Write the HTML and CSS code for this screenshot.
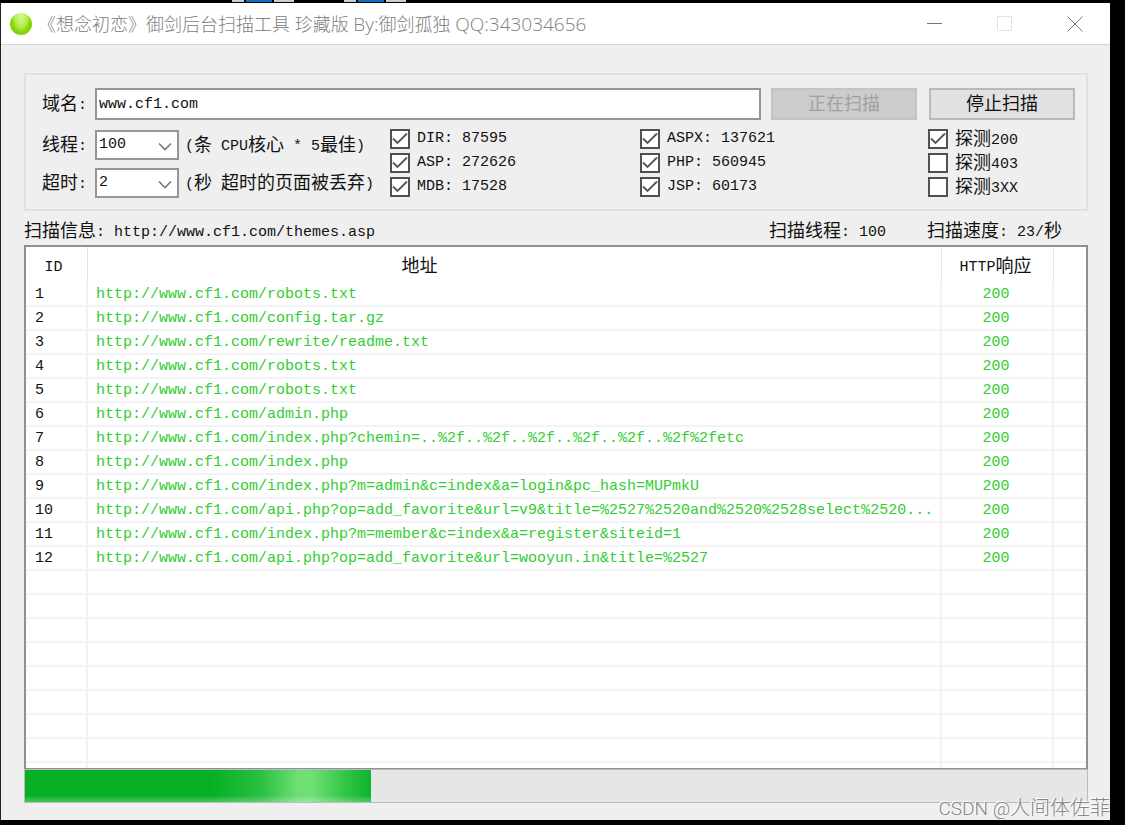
FILE: index.html
```html
<!DOCTYPE html>
<html lang="zh-CN">
<head>
<meta charset="utf-8">
<title>御剑后台扫描工具</title>
<link rel="stylesheet" href="styles.css">
</head>
<body>
<div class="desktop-strip"><i class="thumb"></i><i class="thumb"></i></div>
<main class="window">
  <header class="titlebar">
    <span class="orb"></span>
    <h1 class="title">《想念初恋》御剑后台扫描工具 珍藏版 <span class="title-en">By:</span>御剑孤独 <span class="title-en">QQ:343034656</span></h1>
    <div class="window-buttons">
      <button type="button" aria-label="最小化"><svg width="16" height="16" viewBox="0 0 16 16"><path d="M0 7.5H15" stroke="#777"/></svg></button>
      <button type="button" aria-label="最大化" disabled><svg width="16" height="16" viewBox="0 0 16 16"><path d="M.5 .5H14.5V14.5H.5Z" stroke="#e2e2e2"/></svg></button>
      <button type="button" aria-label="关闭"><svg width="16" height="16" viewBox="0 0 16 16"><path d="M.5 .5L15.5 15.5M15.5 .5L.5 15.5" stroke="#777"/></svg></button>
    </div>
  </header>

  <div class="content">
    <section class="settings">
      <div class="domain-row">
        <label class="field-label" for="domain">域名<span class="en">:</span></label>
        <input class="domain en" id="domain" type="text" value="www.cf1.com">
        <button class="push" type="button" disabled>正在扫描</button>
        <button class="push" type="button">停止扫描</button>
      </div>
      <div class="options">
        <div class="limits">
          <div class="limit">
            <label class="field-label" for="threads">线程<span class="en">:</span></label>
            <span class="combo"><select class="en" id="threads"><option>100</option></select><svg width="14" height="9" viewBox="0 0 14 9"><path d="M1 1.5L7 7.5L13 1.5" stroke="#777" stroke-width="1.6"/></svg></span>
            <span class="hint"><span class="en">(</span>条<span class="en"> CPU</span>核心<span class="en"> * 5</span>最佳<span class="en">)</span></span>
          </div>
          <div class="limit">
            <label class="field-label" for="timeout">超时<span class="en">:</span></label>
            <span class="combo"><select class="en" id="timeout"><option>2</option></select><svg width="14" height="9" viewBox="0 0 14 9"><path d="M1 1.5L7 7.5L13 1.5" stroke="#777" stroke-width="1.6"/></svg></span>
            <span class="hint"><span class="en">(</span>秒<span class="en"> </span>超时的页面被丢弃<span class="en">)</span></span>
          </div>
        </div>
        <div class="checks">
          <label><input type="checkbox" checked><span class="en">DIR: 87595</span></label>
          <label><input type="checkbox" checked><span class="en">ASP: 272626</span></label>
          <label><input type="checkbox" checked><span class="en">MDB: 17528</span></label>
        </div>
        <div class="checks checks-wide">
          <label><input type="checkbox" checked><span class="en">ASPX: 137621</span></label>
          <label><input type="checkbox" checked><span class="en">PHP: 560945</span></label>
          <label><input type="checkbox" checked><span class="en">JSP: 60173</span></label>
        </div>
        <div class="checks">
          <label><input type="checkbox" checked><span class="hint">探测<span class="en">200</span></span></label>
          <label><input type="checkbox"><span class="hint">探测<span class="en">403</span></span></label>
          <label><input type="checkbox"><span class="hint">探测<span class="en">3XX</span></span></label>
        </div>
      </div>
    </section>

    <div class="status">
      <span class="status-url">扫描信息<span class="en">: http://www.cf1.com/themes.asp</span></span>
      <span class="status-item">扫描线程<span class="en">: 100</span></span>
      <span class="status-item">扫描速度<span class="en">: 23/</span>秒</span>
    </div>

    <table class="results">
      <colgroup><col class="col-id"><col><col class="col-code"><col class="col-rest"></colgroup>
      <thead><tr><th><span class="en">ID</span></th><th class="address">地址</th><th><span class="en">HTTP</span>响应</th><th></th></tr></thead>
      <tbody>
        <tr><td>1</td><td>http://www.cf1.com/robots.txt</td><td>200</td><td></td></tr>
        <tr><td>2</td><td>http://www.cf1.com/config.tar.gz</td><td>200</td><td></td></tr>
        <tr><td>3</td><td>http://www.cf1.com/rewrite/readme.txt</td><td>200</td><td></td></tr>
        <tr><td>4</td><td>http://www.cf1.com/robots.txt</td><td>200</td><td></td></tr>
        <tr><td>5</td><td>http://www.cf1.com/robots.txt</td><td>200</td><td></td></tr>
        <tr><td>6</td><td>http://www.cf1.com/admin.php</td><td>200</td><td></td></tr>
        <tr><td>7</td><td>http://www.cf1.com/index.php?chemin=..%2f..%2f..%2f..%2f..%2f..%2f%2fetc</td><td>200</td><td></td></tr>
        <tr><td>8</td><td>http://www.cf1.com/index.php</td><td>200</td><td></td></tr>
        <tr><td>9</td><td>http://www.cf1.com/index.php?m=admin&amp;c=index&amp;a=login&amp;pc_hash=MUPmkU</td><td>200</td><td></td></tr>
        <tr><td>10</td><td>http://www.cf1.com/api.php?op=add_favorite&amp;url=v9&amp;title=%2527%2520and%2520%2528select%2520...</td><td>200</td><td></td></tr>
        <tr><td>11</td><td>http://www.cf1.com/index.php?m=member&amp;c=index&amp;a=register&amp;siteid=1</td><td>200</td><td></td></tr>
        <tr><td>12</td><td>http://www.cf1.com/api.php?op=add_favorite&amp;url=wooyun.in&amp;title=%2527</td><td>200</td><td></td></tr>
        <tr><td></td><td></td><td></td><td></td></tr>
        <tr><td></td><td></td><td></td><td></td></tr>
        <tr><td></td><td></td><td></td><td></td></tr>
        <tr><td></td><td></td><td></td><td></td></tr>
        <tr><td></td><td></td><td></td><td></td></tr>
        <tr><td></td><td></td><td></td><td></td></tr>
        <tr><td></td><td></td><td></td><td></td></tr>
        <tr><td></td><td></td><td></td><td></td></tr>
        <tr class="tail"><td></td><td></td><td></td><td></td></tr>
      </tbody>
    </table>
    <progress class="scan-progress" value="326" max="1000" aria-label="扫描进度"></progress>
  </div>
</main>
<div class="watermark"><span class="watermark-en">CSDN @</span>人间体佐菲</div>
</body>
</html>
```
FILE: styles.css
```css
* { box-sizing: border-box; }

body {
  position: relative;
  margin: 0;
  padding: 0 15px 5px 0;
  background: #000;
  color: #111;
  font: 18px/24px "Noto Sans CJK SC", sans-serif;
}

button, input, select {
  margin: 0;
  font: inherit;
  color: inherit;
}

svg { fill: none; }

.en {
  font-family: "Liberation Mono", monospace;
  font-size: 15px;
  line-height: 18px;
  vertical-align: 1px;
  white-space: pre;
}

/* taskbar thumbnails peeking out above the window */
.desktop-strip {
  display: flex;
  gap: 50px;
  height: 3px;
  padding-left: 232px;
}

.thumb {
  width: 62px;
  height: 2px;
  background: linear-gradient(90deg, #ccc 12px, #000 12px 14px, #0f6fc0 14px 40px, #000 40px 42px, #ccc 42px);
}

.window {
  background: #efefef;
  border-left: 1px solid #222;
}

.titlebar {
  display: flex;
  align-items: center;
  height: 42px;
  padding-left: 9px;
  background: #fff;
  border-bottom: 1px solid #d6d6d6;
}

.orb {
  width: 22px;
  height: 22px;
  border-radius: 50%;
  background: radial-gradient(ellipse at 50% 15%, #d9f89a 0, #b4ec4c 40%, #83d60a 62%, #76c900 100%);
}

.title {
  flex: 1;
  margin: 0 0 0 6px;
  color: #808080;
  font: 300 18px/24px "Open Sans", "Noto Sans CJK SC", sans-serif;
}

.title-en { font-size: 19px; }

.window-buttons { display: flex; }

.window-buttons button {
  display: grid;
  place-items: center;
  width: 70px;
  height: 40px;
  padding: 0;
  border: 0;
  background: none;
}

.content { padding: 28px 22px 17px 23px; }

.settings {
  padding: 13px 11px 10px 16px;
  border: 2px solid #e0e0e0;
}

.domain-row {
  display: flex;
  align-items: center;
}

.field-label {
  width: 53px;
  flex: none;
}

.field-label,
.hint { padding-bottom: 3px; }

.domain {
  flex: 1;
  min-width: 0;
  height: 32px;
  margin-right: 10px;
  padding: 0 2px;
  border: 2px solid #959595;
  border-radius: 0;
  background: #fff;
}

.push {
  width: 146px;
  height: 32px;
  padding: 0 0 4px;
  border: 2px solid #b9b9b9;
  background: #e1e1e1;
}

.push + .push { margin-left: 12px; }

.push:disabled {
  border-color: #c4c4c4;
  background: #ccc;
  color: #a0a0a0;
}

.options {
  display: flex;
  padding-top: 7px;
}

.limits {
  display: grid;
  gap: 7px;
  width: 348px;
  padding-top: 3px;
  white-space: nowrap;
}

.limit {
  display: flex;
  align-items: center;
  height: 30px;
}

.combo {
  position: relative;
  width: 84px;
  height: 30px;
  margin-right: 6px;
}

.combo select {
  display: block;
  width: 100%;
  height: 100%;
  padding: 0 0 0 2px;
  border: 2px solid #959595;
  border-radius: 0;
  background: #fff;
  appearance: none;
}

.combo svg {
  position: absolute;
  top: 12px;
  right: 7px;
  pointer-events: none;
}

.checks {
  width: 250px;
  white-space: nowrap;
}

.checks:last-child { width: 147px; }

.checks-wide {
  flex: 1;
}

.checks label {
  display: flex;
  align-items: center;
  gap: 7px;
  height: 24px;
}

.checks input {
  width: 20px;
  height: 20px;
  border: 2px solid #505050;
  background: #fff;
  appearance: none;
}

.checks input:checked {
  background: #fff url("data:image/svg+xml,%3Csvg xmlns='http://www.w3.org/2000/svg' viewBox='0 0 16 16'%3E%3Cpath d='M1 7.5L5.5 12L15 2.5' fill='none' stroke='%23555' stroke-width='1.9'/%3E%3C/svg%3E") center / 16px;
}

.status {
  display: flex;
  gap: 8px;
  padding: 6px 0 3px;
}

.status-url { flex: 1; }

.status-item { width: 150px; }

.status-item:last-child { width: 161px; }

.results {
  width: 100%;
  table-layout: fixed;
  border: 2px solid #8b9099;
  border-bottom-width: 1px;
  border-collapse: separate;
  border-spacing: 0;
  background: #fff;
}

.col-id { width: 62px; }
.col-code { width: 112px; }
.col-rest { width: 32px; }

.results th {
  height: 36px;
  padding: 0 4px 2px 0;
  border-right: 1px solid #e2e2e2;
  font-weight: 400;
}

.results th:first-child { padding-right: 6px; }

.results .address { padding-right: 190px; }

.results td {
  height: 24px;
  padding: 2px 0 0;
  overflow: hidden;
  border-right: 2px solid #f3f3f3;
  border-bottom: 2px solid #f3f3f3;
  color: #32cd32;
  font: 15px/20px "Liberation Mono", monospace;
  white-space: nowrap;
}

.results td:first-child {
  padding-left: 9px;
  color: #111;
}

.results td:nth-child(2) { padding-left: 8px; }

.results td:nth-child(3) {
  padding-right: 2px;
  text-align: center;
}

.results th:last-child,
.results td:last-child { border-right: 0; }

.results .tail td {
  height: 5px;
  border-bottom: 0;
  line-height: 0;
}

.scan-progress {
  display: block;
  width: 100%;
  height: 34px;
  border: 1px solid #bcbcbc;
  background: #e6e6e6;
  appearance: none;
}

.scan-progress::-webkit-progress-bar { background: #e6e6e6; }

.scan-progress::-webkit-progress-value {
  background:
    linear-gradient(180deg, transparent 80%, rgba(255, 255, 255, .22) 96%),
    linear-gradient(90deg, #06b025 54%, #2abf41 68%, #6fdf74 79%, #6fdf74 83%, #2fc445 93%, #0eb42b 100%);
}

.watermark {
  position: absolute;
  right: 15px;
  bottom: 4px;
  color: #858585;
  font-size: 20px;
  font-weight: 300;
  text-shadow: -1px -1px 0 #fff;
  white-space: nowrap;
}

.watermark-en {
  font-family: Roboto, sans-serif;
  font-size: 19px;
}
```
